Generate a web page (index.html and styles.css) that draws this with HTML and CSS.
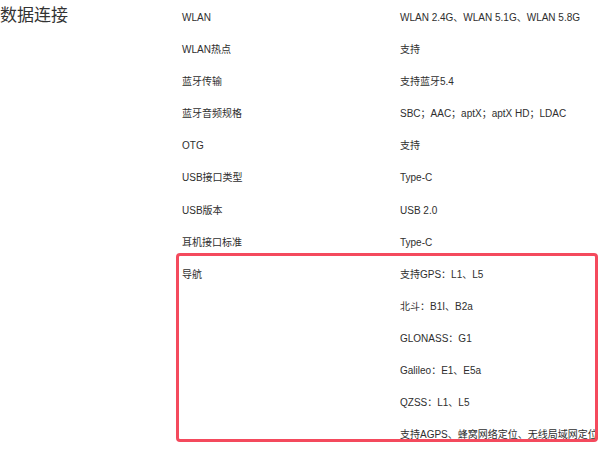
FILE: index.html
```html
<!DOCTYPE html>
<html lang="zh-CN">
<head>
    <meta charset="UTF-8">
    <meta name="viewport" content="width=device-width, initial-scale=1.0">
    <title>数据连接</title>
    <link rel="stylesheet" href="styles.css">
</head>
<body>
    <div class="section">
        <h2 class="section-title">数据连接</h2>
        <div class="spec-table">
            <div class="spec-row"><div class="label">WLAN</div><div class="value">WLAN 2.4G、WLAN 5.1G、WLAN 5.8G</div></div>
            <div class="spec-row"><div class="label">WLAN热点</div><div class="value">支持</div></div>
            <div class="spec-row"><div class="label">蓝牙传输</div><div class="value">支持蓝牙5.4</div></div>
            <div class="spec-row"><div class="label">蓝牙音频规格</div><div class="value">SBC；AAC；aptX；aptX HD；LDAC</div></div>
            <div class="spec-row"><div class="label">OTG</div><div class="value">支持</div></div>
            <div class="spec-row"><div class="label">USB接口类型</div><div class="value">Type-C</div></div>
            <div class="spec-row"><div class="label">USB版本</div><div class="value">USB 2.0</div></div>
            <div class="spec-row"><div class="label">耳机接口标准</div><div class="value">Type-C</div></div>
            <div class="spec-row marked">
                <div class="label">导航</div>
                <div class="value">
                    <p>支持GPS：L1、L5</p>
                    <p>北斗：B1I、B2a</p>
                    <p>GLONASS：G1</p>
                    <p>Galileo：E1、E5a</p>
                    <p>QZSS：L1、L5</p>
                    <p>支持AGPS、蜂窝网络定位、无线局域网定位</p>
                </div>
            </div>
        </div>
    </div>
</body>
</html>
```

FILE: styles.css
```css
body {
    margin: 0;
    padding: 0;
    background: #fff;
    color: #333;
    font-family: "Liberation Sans", "Noto Sans CJK SC", sans-serif;
    overflow: hidden;
}

.section {
    display: flex;
}

.section-title {
    width: 176px;
    flex-shrink: 0;
    margin: 0;
    font-size: 17px;
    font-weight: normal;
    line-height: 32px;
    color: #333;
}

.spec-table {
    flex: 1;
    min-width: 0;
    padding-top: 2px;
    display: flex;
    flex-direction: column;
}

.spec-row {
    display: grid;
    grid-template-columns: 218px minmax(0, 1fr);
    padding-left: 6px;
    font-size: 10px;
    line-height: 32.1px;
    white-space: nowrap;
    color: #2e2e2e;
}

.value p {
    margin: 0;
}

/* red annotation frame */
.marked {
    position: relative;
}

.marked::after {
    content: "";
    position: absolute;
    top: -6px;
    left: 0;
    right: 2px;
    bottom: 9px;
    border: 3px solid #f44a5d;
    border-radius: 4px;
}
```
